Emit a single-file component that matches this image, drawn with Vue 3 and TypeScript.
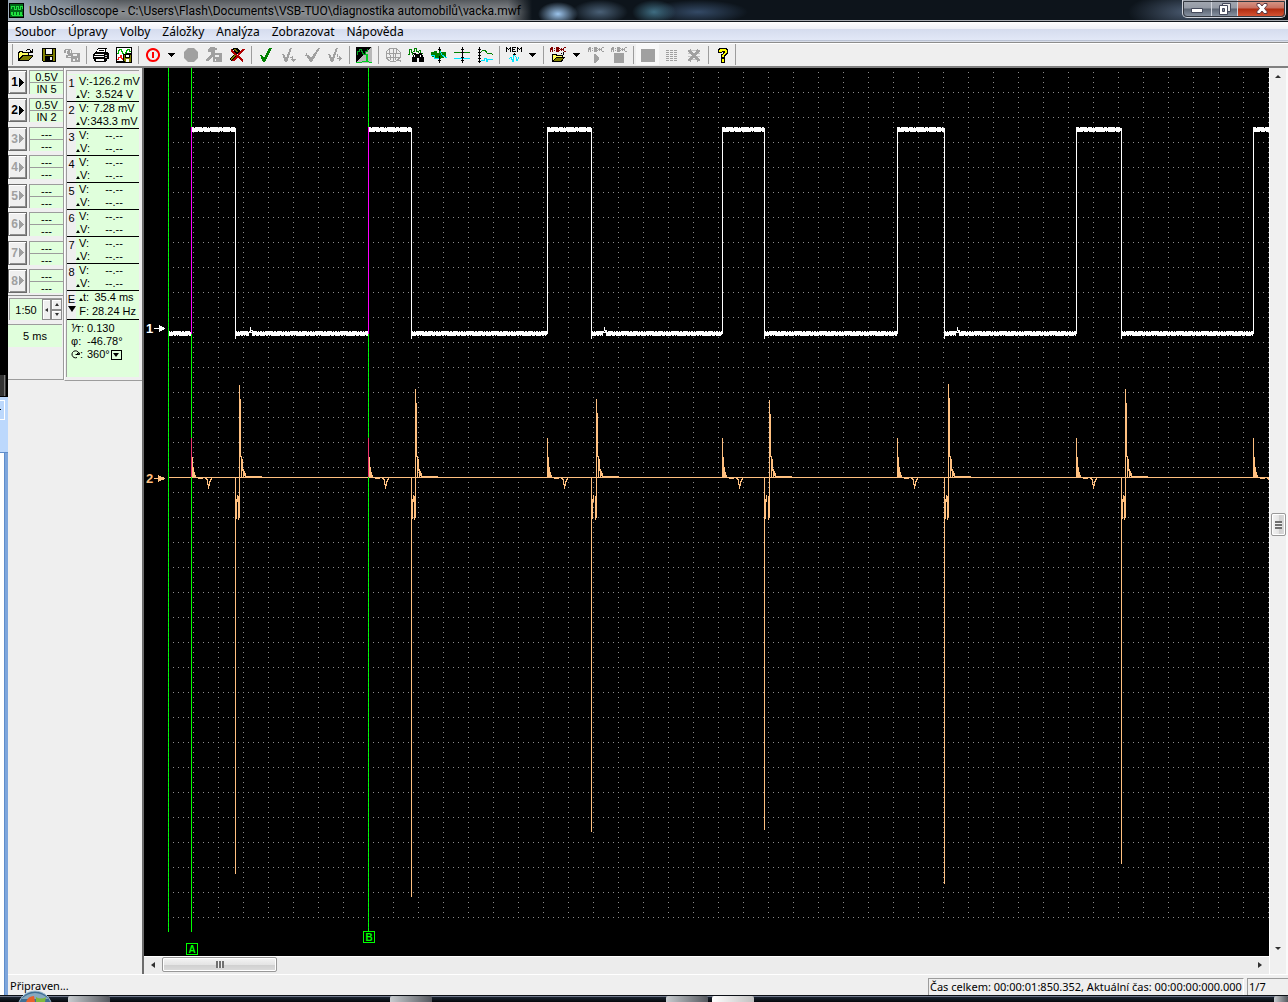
<script setup lang="ts">
interface Layer {
  d: string
  fill?: string
  stroke?: string
  w?: number
  smooth?: boolean
}
interface Tool {
  kind: 'button' | 'drop' | 'sep'
  label?: string
  icon?: string
  disabled?: boolean
  pressed?: boolean
}

const G = '#a0a0a0'
const K = '#000000'
const DG = '#008000'
const CY = '#00e5ff'
const OL = '#808000'
const DR = '#800000'

const abc = (c: string): Layer => ({
  d: 'M1 0h2v5h-1v-2h-1v2h-1v-4h1zM4 1h1v1h-1zM4 3h1v1h-1zM6 0h3v1h1v1h-1v1h1v1h-1v1h-3zM10 2h3v1h-3zM11 1h1v3h-1zM14 0h2v1h-2v3h2v1h-2v-1h-1v-3h1z',
  fill: c,
})

const icons: Record<string, Layer[]> = {
  open: [
    { d: 'M9 2h3v1h-3zM8 3h1v1h-1zM12 3h1v1h1v-2h1v4h-4v-1h1v-1h-1z', fill: K },
    { d: 'M0 5h1v-1h4v1h6v3h4v1l-4 5h-11z', fill: K },
    { d: 'M1 6h1v-1h2v1h6v2h-6l-3 4z', fill: '#ffff60' },
    { d: 'M5 9h9l-3 4h-9z', fill: OL },
  ],
  save: [
    { d: 'M1 1h14v14h-13l-1-1z', fill: K },
    { d: 'M2 2h2v6h8v-6h2v12h-12z', fill: OL },
    { d: 'M5 2h6v5h-6z', fill: '#f4f4f4' },
    { d: 'M4 9h8v5h-8z', fill: K },
    { d: 'M9 10h2v3h-2z', fill: '#f4f4f4' },
  ],
  tape: [
    { d: 'M1 2h6v1h-6zM0 3h2v3h-2zM3 4h1v-1h2v4h-3zM7 3h1v3h-1zM2 8h2v2h3v1h-5zM4 6h12v9h-9v-6h-3z', fill: G },
    { d: 'M9 7h4v2h-4zM9 12h2v2h-2zM13 11h1v2h-1z', fill: '#efefef' },
  ],
  print: [
    { d: 'M5 1h9v1h-1v3h2v1h1v6h-2v2h-1v1h-11v-1h-1v-2h-1v-5h1v-1h1v-1h1z', fill: K },
    { d: 'M5 2h7v3h-8zM2 7h9v1h-9zM1 9h10v1h-10zM3 12h8v2h-8z', fill: '#ffffff' },
    { d: 'M12 8h2v1h-2zM12 10h2v1h-2z', fill: '#c0c0c0' },
    { d: 'M6 3h5v1h-5z', fill: K },
  ],
  wavesave: [
    { d: 'M0 0h16v16h-16z', fill: K },
    { d: 'M1 1h14v5h-6v8h-8z', fill: '#ffffff' },
    { d: 'M1 6h1v-3h1v-1h2v2h1v2h1v1h2v-2h1v-2h1v-1h2v2h1v1', stroke: '#00b000' },
    { d: 'M1 12h1v-2h2v-2h1v3h1v1h2', stroke: '#ff2020' },
    { d: 'M7 7h9v9h-8l-1-1z', fill: K },
    { d: 'M8 8h1v3h5v-3h1v7h-6v-1h-1z', fill: OL },
    { d: 'M10 12h3v3h-3zM10 8h3v2h-3z', fill: '#ffffff' },
  ],
  power: [
    { d: 'M8 2a6 6 0 1 0 .01 0z', stroke: '#ff0000', w: 2, smooth: true },
    { d: 'M7 5h2v6h-2z', fill: '#ff0000' },
  ],
  record: [{ d: 'M5 1h6l4 4v6l-4 4h-6l-4-4v-6z', fill: G, smooth: true }],
  hammer: [
    { d: 'M4 0h5v1h2v2h-2v3h7v9h-9v-6l-5 5h-2v-2l5-5v-2h-3v-3h1z', fill: G },
    { d: 'M9 8h4v2h-4zM9 12h1v2h-1z', fill: '#efefef' },
  ],
  hammerx: [
    { d: 'M4 1h4l3 3v3h-3l-3-2v-2h-2zM0 12l6-6 2 2-6 6z', fill: K },
    { d: 'M5 2h2l2 3h-2zM1 12l5-5 1 1-5 5z', fill: OL },
    { d: 'M2 3l12 11M15 2l-11 12', stroke: '#b00000', w: 2 },
  ],
  check: [{ d: 'M2 8h2l2 3 5-10h3l-7 14h-2z', fill: DG }],
  check1: [{ d: 'M1 7h2l2 4 4-10h2l-5 14h-2zM9 10h2v1h-2zM11 9h1v3h3v1h-1v1h-1v1h-1v-1h-1v-1h-1v-1h1z', fill: G }],
  check2: [{ d: 'M0 8h2v-2h1v2h2l2 3 7-10h2l-8 14h-2l-2-4h-1v-2h-2z', fill: G }],
  check3: [{ d: 'M1 7h2l2 4 4-10h2l-5 14h-2zM10 7h1v3h-1zM10 11h2v-2h1v1h1v1h1v1h-1v1h-1v1h-1v-2h-2z', fill: G }],
  invert: [
    { d: 'M0 0h16v16h-16z', fill: '#b8b8b8' },
    { d: 'M0 0h16L0 15z', fill: K },
    { d: 'M1 8v-4h2v-2h2v2h1v2h1v1h2v-3h2v-2', stroke: '#00a020' },
    { d: 'M0 15h6l3-1h1v-7h1v7l2 1h3', stroke: '#00d020' },
  ],
  globe: [
    { d: 'M5 1h6l4 4v6l-4 3h-6l-4-3v-6zM1 6h14M1 10h14M4 2l2 11M12 2l-2 11M8 1v13M12 13h3v2', stroke: G },
  ],
  binoc: [
    { d: 'M0 7h1v-5h2v3h1v3M5 4h1v-3h2v3h2v2M11 3h1v3h3', stroke: DG },
    { d: 'M5 6h3v1h3v-1h3v2h1v2h1v5h-5v-4h-2v4h-5v-5h1v-2h1z', fill: K },
    { d: 'M6 8h1v2h-1zM12 8h1v2h-1z', fill: '#ffffff' },
  ],
  cut: [
    { d: 'M0 8v-3h3v-1h3v2h2v-3h2v2h5v5h-2v1h-3v1h-4v-1h-2v-1h-3z', fill: DG },
    { d: 'M0 8h3v3h4v1M9 4l2 4 3 2h2', stroke: CY },
    { d: 'M8 0h1v4h-1zM7 2h3v1h-3zM8 9h1v7h-1zM7 13h3v1h-3z', fill: K },
  ],
  levels: [
    { d: 'M0 5h16', stroke: DG },
    { d: 'M0 11h16', stroke: CY },
    { d: 'M8 0h1v16h-1zM7 2h3v1h-3zM7 5h3v1h-3zM7 10h3v1h-3zM7 13h3v1h-3z', fill: K },
  ],
  scale: [
    { d: 'M4 5l2-2h2l2 3h4l2 2', stroke: DG },
    { d: 'M4 13h3v-2h2v3h1v-2h6', stroke: CY },
    { d: 'M2 0h1v16h-1zM1 2h3v1h-3zM1 5h3v1h-3zM1 8h3v1h-3zM1 11h3v1h-3zM1 14h3v1h-3z', fill: K },
  ],
  mem: [
    { d: 'M0 0h1v1h1v1h1v-1h1v-1h1v5h-1v-3h-1v1h-1v-1h-1v3h-1zM6 0h4v1h-3v1h2v1h-2v1h3v1h-4zM11 0h1v1h1v1h1v-1h1v-1h1v5h-1v-3h-1v1h-1v-1h-1v3h-1z', fill: K },
    { d: 'M3 12l2-2 2 5 1-7 2 2 1 4 2-4', stroke: CY },
    { d: 'M8 6h1v1h1v1h-3v-1h1z', fill: K },
  ],
  abcopen: [
    abc(DR),
    { d: 'M2 7h5v1h6v2h2l-3 5h-10zM13 5h1v3h-1zM11 6h1v1h-1z', fill: K },
    { d: 'M3 8h3v1h6v1h-6l-3 4z', fill: '#ffff60' },
    { d: 'M6 11h7l-2 3h-7z', fill: OL },
  ],
  abcplay: [abc(G), { d: 'M6 7h1l4 4v1l-4 4h-1z', fill: G }],
  abcstop: [abc(G), { d: 'M3 6h10v10h-10z', fill: G }],
  block: [{ d: 'M1 2h14v13h-14z', fill: G }],
  lines: [{ d: 'M3 3h11M3 5h11M3 7h11M3 9h11M3 11h11M3 13h11', stroke: G }, { d: 'M6 2v12M10 2v12', stroke: '#efefef' }],
  linesx: [{ d: 'M2 3h12M2 6h12M2 9h12M2 12h12', stroke: '#c4c4c4' }, { d: 'M3 3l10 11M13 3l-10 11', stroke: G, w: 3 }],
  help: [
    { d: 'M4 1h8v1h1v5h-1v1h-1v1h-1v2h-4v-4h2v-2h-1v1h-4v-4h1z', fill: K },
    { d: 'M6 11h4v5h-4z', fill: K },
    { d: 'M5 2h6v1h1v3h-1v1h-1v1h-1v2h-2v-2h1v-1h1v-1h1v-2h-3v1h-3v-2h1zM7 12h2v3h-2z', fill: '#ffff00' },
  ],
}

const b = (icon: string, label: string, disabled = false, pressed = false): Tool => ({ kind: 'button', icon, label, disabled, pressed })
const sep: Tool = { kind: 'sep' }
const drop = (label: string): Tool => ({ kind: 'drop', label })

const tools: Tool[] = [
  b('open', 'Otevřít'), b('save', 'Uložit'), b('tape', 'Uložit část', true), sep,
  b('print', 'Tisk'), b('wavesave', 'Uložit obrázek'), sep,
  b('power', 'Start'), drop('Režim startu'), b('record', 'Záznam', true), b('hammer', 'Nastavení', true), b('hammerx', 'Zrušit nastavení'), sep,
  b('check', 'Použít'), b('check1', 'Záložka dolů', true), b('check2', 'Předchozí záložka', true), b('check3', 'Další záložka', true), sep,
  b('invert', 'Invertovat barvy'), sep,
  b('globe', 'Přehled', true), b('binoc', 'Hledat'), b('cut', 'Filtr'), b('levels', 'Úrovně'), b('scale', 'Měřítko'), sep,
  b('mem', 'Paměť'), drop('Volba paměti'), sep,
  b('abcopen', 'Otevřít skript'), drop('Skripty'), b('abcplay', 'Spustit skript', true), b('abcstop', 'Zastavit skript', true), sep,
  b('block', 'Plocha', true, true), b('lines', 'Řádky', true), b('linesx', 'Smazat řádky', true), sep,
  b('help', 'Nápověda'),
]

const menus = ['Soubor', 'Úpravy', 'Volby', 'Záložky', 'Analýza', 'Zobrazovat', 'Nápověda']

const channels = [
  { n: 1, range: '0.5V', input: 'IN 5', v: '-126.2 mV', dv: '3.524 V' },
  { n: 2, range: '0.5V', input: 'IN 2', v: '7.28 mV', dv: '343.3 mV' },
  ...[3, 4, 5, 6, 7, 8].map((n) => ({ n, range: '---', input: '---', v: '--.--', dv: '--.--' })),
]

/* Graticule: major lines every 25 units, a dot every 5 units. */
const rows = Array.from({ length: 34 }, (_, i) => 24 + i * 25)
const cols = Array.from({ length: 44 }, (_, i) => 49 + i * 25)

/* Channel 1 pulses, as [rise, fall]. */
const pulses = [[47, 91], [224, 267], [403, 447], [578, 620], [753, 800], [932, 977], [1109, 1140]]
const lows = pulses.map((p, i) => [i === 0 ? 24 : pulses[i - 1][1], p[0]])
const blips = [107, 461, 814]

/* Channel 2 ignition spikes: fall, spike position, spike top, deepest point. */
const kicks = [
  [91, 95, 317, 806], [267, 271, 321, 829], [447, 452, 331, 764],
  [620, 625, 332, 762], [800, 804, 316, 816], [977, 981, 321, 796],
]

const seg = (x: number, a: number, z: number) => `M${x} ${a}h1V${z}h-1z`
const riseShape = (x: number) =>
  seg(x, 370, 410) + seg(x + 1, 389, 409) + seg(x + 2, 399, 409) + seg(x + 3, 404, 409) + seg(x + 4, 407, 410) +
  `M${x + 5} 409h9v1h-9zM${x + 7} 410h5v1h-5z` +
  seg(x + 14, 409, 411) + seg(x + 15, 410, 412) + seg(x + 16, 411, 417) + seg(x + 17, 416, 421) +
  seg(x + 18, 413, 418) + seg(x + 19, 411, 414) + seg(x + 20, 410, 412)
const kickShape = ([f, s, top, deep]: number[]) =>
  seg(f, 409, deep) + seg(f + 1, 431, 451) + seg(f + 2, 427, 434) + seg(s - 1, 428, 452) +
  seg(s, top, 450) + seg(s + 1, top + 14, 389) + seg(s + 2, 388, 410) + seg(s + 3, 391, 403) +
  seg(s + 4, 401, 410) + seg(s + 5, 403, 408) + seg(s + 6, 405, 409) + `M${s + 7} 408h16v1h-16z`

const trace2 = [...pulses.map((p) => riseShape(p[0])), ...kicks.map(kickShape)].join('')
</script>

<template>
  <div class="screen">
    <div class="desktop">
      <div class="behind"><div class="behind-dark"></div><div class="behind-edge"></div><div class="behind-box"></div><div class="behind-blue"></div></div>
      <main class="window">
        <header class="title">
          <svg class="app-icon" width="16" height="16" viewBox="0 0 16 16" shape-rendering="crispEdges" aria-hidden="true">
            <path d="M0 0h15v15h-15z" fill="#000" />
            <path d="M1 1h13v13h-13z" fill="#006818" />
            <path d="M2 6v-3h3v3h2v-3h2v3h2v-3h2v3M2 12v-3h1v3h2v-3h1v3h2v-3h1v3h2v-3h1v3h2" fill="none" stroke="#20e040" />
          </svg>
          <h1>UsbOscilloscope - C:\Users\Flash\Documents\VSB-TUO\diagnostika automobilů\vacka.mwf</h1>
          <div class="caption">
            <button type="button" class="cap min" aria-label="Minimalizovat"><svg width="12" height="12" viewBox="0 0 12 12"><path d="M.5 5.500h11v4h-11z" fill="#fff" stroke="#454a5c" /></svg></button>
            <button type="button" class="cap max" aria-label="Obnovit"><svg width="12" height="12" viewBox="0 0 12 12"><path d="M3.500.5h8v8h-8z" fill="#eee" stroke="#454a5c" /><path d="M.5 2.500h8v9h-8z" fill="#fff" stroke="#454a5c" /><path d="M3.500 5.500h2v3h-2z" fill="#8a92a0" stroke="#454a5c" /></svg></button>
            <button type="button" class="cap close" aria-label="Zavřít"><svg width="12" height="11" viewBox="0 0 12 11"><path d="M1 .5h3l2 2.500 2-2.500h3v2l-2.500 3 2.500 3v2h-3l-2-2.500-2 2.500h-3v-2l2.500-3-2.500-3z" fill="#fff" stroke="#5a3a44" /></svg></button>
          </div>
        </header>
        <nav class="menu"><button v-for="m in menus" :key="m" type="button">{{ m }}</button></nav>
        <div class="toolbar">
          <div class="tools" role="toolbar" aria-label="Nástroje">
            <template v-for="(t, i) in tools" :key="i">
              <span v-if="t.kind === 'sep'" class="sep"></span>
              <button v-else-if="t.kind === 'drop'" type="button" class="drop" :aria-label="t.label">
                <svg width="7" height="4" viewBox="0 0 7 4" shape-rendering="crispEdges"><path d="M0 0h7v1h-1v1h-1v1h-1v1h-1v-1h-1v-1h-1v-1h-1z" /></svg>
              </button>
              <button v-else type="button" class="tool" :class="{ pressed: t.pressed }" :disabled="t.disabled" :aria-label="t.label">
                <svg width="16" height="16" viewBox="0 0 16 16">
                  <path
                    v-for="(l, k) in icons[t.icon!]" :key="k" :d="l.d" :fill="l.fill ?? 'none'" :stroke="l.stroke ?? 'none'"
                    :stroke-width="l.w ?? 1" :shape-rendering="l.smooth ? 'auto' : 'crispEdges'"
                  />
                </svg>
              </button>
            </template>
          </div>
        </div>

        <div class="body">
          <aside class="side">
            <section class="inputs">
              <div class="channel-list">
                <div v-for="c in channels" :key="c.n" class="channel">
                  <button type="button" class="chan" :disabled="c.n > 2" :aria-label="'Kanál ' + c.n">
                    {{ c.n }}<svg width="5" height="9" viewBox="0 0 5 9" shape-rendering="crispEdges"><path d="M0 0L5 4.500L0 9z" fill="currentColor" /></svg>
                  </button>
                  <div class="fields"><output>{{ c.range }}</output><output>{{ c.input }}</output></div>
                </div>
              </div>
              <div class="zoom">
                <output>1:50</output>
                <button type="button" class="spin tall" aria-label="Výchozí"><i class="tri left"></i></button>
                <div class="spins">
                  <button type="button" class="spin" aria-label="Více"><i class="tri up"></i></button>
                  <button type="button" class="spin" aria-label="Méně"><i class="tri down"></i></button>
                </div>
              </div>
              <output class="time">5 ms</output>
            </section>
            <section class="readout">
              <div class="values">
                <div v-for="c in channels" :key="c.n" class="meas">
                  <b>{{ c.n }}</b>
                  <p><span class="lab">V:</span><output>{{ c.v }}</output></p>
                  <p><span class="lab delta">V:</span><output>{{ c.dv }}</output></p>
                </div>
                <div class="meas ext">
                  <b>E<i class="tri marker"></i></b>
                  <p><span class="lab delta">t:</span><output>35.4 ms</output></p>
                  <p><span class="lab">F:</span><output>28.24 Hz</output></p>
                </div>
                <div class="phase">
                  <p><span>⅟т:</span><output>0.130</output></p>
                  <p><span>φ:</span><output>-46.78°</output></p>
                  <p>
                    <span><svg width="9" height="9" viewBox="0 0 9 9"><path d="M8 4.500a3.500 3.500 0 1 0-2 3M8 4.500h-3.500M6 3l2 2 1-2.500" fill="none" stroke="#000" /></svg>:</span><output>360°</output>
                    <button type="button" class="deg" aria-label="Rozsah úhlu"><i class="tri marker"></i></button>
                  </p>
                </div>
              </div>
            </section>
          </aside>

          <div class="view">
            <svg class="plot" shape-rendering="crispEdges" role="img" aria-label="Průběh signálů">
              <g stroke="#8c8c8c" stroke-dasharray="1 4">
                <line v-for="y in rows" :key="'r' + y" x1="29" :y1="y + 0.5" x2="1125" :y2="y + 0.5" />
                <line v-for="x in cols" :key="'c' + x" :x1="x + 0.5" y1="4" :x2="x + 0.5" y2="850" />
              </g>
              <g fill="#fff">
                <template v-for="p in pulses" :key="p[0]">
                  <rect :x="p[0]" y="60" :width="p[1] - p[0]" height="3" />
                  <path :d="`M${p[0]} 59.500H${p[1]}`" stroke="#fff" stroke-dasharray="3 1 7 1 4 1 1 1 8 1" />
                  <path :d="`M${p[0]} 63.500H${p[1]}`" stroke="#fff" stroke-dasharray="7 1 4 1 6 1 9 1 1 1" />
                  <path :d="seg(p[0], 60, 266) + seg(p[1], 60, 271)" />
                </template>
                <template v-for="l in lows" :key="l[0]">
                  <rect :x="l[0]" y="264" :width="l[1] - l[0]" height="3" />
                  <path :d="`M${l[0]} 263.500H${l[1]}`" stroke="#fff" stroke-dasharray="2 1 1 1 8 1 2 1 5 1 1 1" />
                  <path :d="`M${l[0]} 267.500H${l[1]}`" stroke="#fff" stroke-dasharray="5 1 2 1 1 1 9 1 3 1" />
                </template>
                <path v-for="x in blips" :key="x" :d="`M${x - 1} 263h3v-1h-2v-3h-1z`" />
              </g>
              <path v-for="x in blips" :key="x" :d="`M${x - 2} 265h3v3h-3z`" fill="#000" />
              <path d="M24 409.500H1125" stroke="#ffc080" />
              <path :d="trace2" fill="#ffc080" />
              <path d="M24.500 0V864M47.500 0V864M224.500 0V863" stroke="#00ff00" />
              <path d="M24.500 4V864M224.500 4V863" stroke="#00c020" stroke-dasharray="1 4" />
              <path d="M47.500 59V266M224.500 59V266" stroke="#ff00ff" />
              <path d="M47.500 370V409M224.500 370V409" stroke="#f03070" />
              <g class="tag">
                <rect x="42.500" y="875.500" width="11" height="11" rx="1" /><text x="48" y="885">A</text>
                <rect x="219.500" y="863.500" width="11" height="11" rx="1" /><text x="225" y="873">B</text>
              </g>
              <g class="mark" fill="#fff"><text x="2" y="265">1</text><path d="M10 260h5v-3l6 3v1l-6 3v-3h-5z" /></g>
              <g class="mark" fill="#ffc080"><text x="2" y="415">2</text><path d="M10 410h4v-3l7 3v1l-7 3v-3h-4z" /></g>
            </svg>
            <div class="hscroll">
              <button type="button" class="arrow" aria-label="Posunout vlevo"><i class="tri left"></i></button>
              <button type="button" class="thumb" aria-label="Posuvník času"><i class="grip"></i></button>
              <span class="track"></span>
              <button type="button" class="arrow" aria-label="Posunout vpravo"><i class="tri right"></i></button>
            </div>
          </div>
          <div class="vscroll">
            <button type="button" class="arrow" aria-label="Posunout nahoru"><i class="tri up"></i></button>
            <span class="track above"></span>
            <button type="button" class="thumb" aria-label="Svislý posuvník"><i class="grip"></i></button>
            <span class="track below"></span>
            <button type="button" class="arrow" aria-label="Posunout dolů"><i class="tri down"></i></button>
          </div>
        </div>
        <footer class="status">
          <span class="ready">Připraven...</span>
          <span class="cell total">Čas celkem: 00:00:01:850.352, Aktuální čas: 00:00:00:000.000</span>
          <span class="cell page">1/7</span>
        </footer>
      </main>
    </div>
    <div class="taskbar">
      <svg class="orb" width="36" height="12" viewBox="0 0 36 12" aria-hidden="true">
        <circle cx="18" cy="18" r="17" fill="#3f6f94" stroke="#a9c4d6" />
        <path d="M4 9q14-12 28 0z" fill="#86a9c0" />
        <path d="M9 12q2-6 8-6l1 6z" fill="#e8602c" /><path d="M19 7q5 3 10 0l-1 5h-9z" fill="#7fb83c" />
      </svg>
      <i class="task t1"></i><i class="task t2"></i><i class="task t3"></i><i class="task t4"></i><i class="task t5"></i>
    </div>
  </div>
</template>

<style>
body { margin: 0; background: #000; }
</style>

<style scoped>
* { box-sizing: border-box; }
button { margin: 0; padding: 0; border: 0; background: none; font: inherit; color: inherit; display: flex; align-items: center; justify-content: center; flex: none; }
svg { display: block; flex: none; }
p { margin: 0; }
.screen { min-height: 100vh; display: flex; flex-direction: column; font: 12px/16px "Noto Sans", "Open Sans", sans-serif; color: #000; }
.desktop { flex: 1; display: flex; }
.behind { width: 8px; display: flex; flex-direction: column; background: #000; }
.behind-dark { height: 375px; }
.behind-edge { height: 22px; background: linear-gradient(90deg, #333 0 4px, #777 4px 5px, #333 5px 6px, #000 6px); border-bottom: 1px solid #000; }
.behind-box { height: 55px; background: linear-gradient(#fff, #fff) 4px 3px / 1px 20px no-repeat, linear-gradient(#fff, #fff) 0 3px / 4px 1px no-repeat, linear-gradient(#fff, #fff) 0 22px / 4px 1px no-repeat, linear-gradient(#000, #000) 0 12px / 1px 1px no-repeat, #bcd8fc; }
.behind-blue { flex: 1; border-top: 1px solid #5f8dca; background: linear-gradient(90deg, #fff 0 4px, #5f8dca 4px 5px, #7ea6dc 5px); }

.window { flex: 1; min-width: 0; display: flex; flex-direction: column; background: #efefef; }
.title { height: 22px; display: flex; align-items: flex-start; border-bottom: 1px solid #10161c; box-shadow: inset 0 -1px #a8acb2; padding: 0 2px 0 1px;
  background:
    radial-gradient(ellipse 20px 12px at 550px 14px, #9cc4ec, transparent),
    radial-gradient(ellipse 28px 12px at 592px 12px, #4a6076, transparent),
    radial-gradient(ellipse 22px 12px at 646px 12px, #3f6d82, transparent),
    radial-gradient(ellipse 50px 12px at 690px 12px, #344a66, transparent),
    radial-gradient(ellipse 60px 20px at 1180px 12px, #4a5a70, transparent),
    linear-gradient(90deg, rgba(176, 196, 216, .7) 0, transparent 110px),
    linear-gradient(90deg, transparent 0 500px, #0d141b 524px),
    linear-gradient(#54585c, #8c8f92 12px, #74777a); }
.app-icon { margin: 3px 4px 0 0; }
h1 { margin: 3px 0 0; font: 12px/16px Roboto, sans-serif; white-space: nowrap; flex: 1; }
.caption { display: flex; height: 18px; border: 1px solid #d0d4dc; border-top: 0; border-radius: 0 0 5px 5px; overflow: hidden; outline: 1px solid #33373f; outline-offset: -2px; }
.cap { border-right: 1px solid #d0d4dc; background: linear-gradient(#a5aab3, #949aa5 8px, #5c6573 9px, #8c97a6); }
.min { width: 29px; }
.max { width: 26px; }
.close { width: 47px; border: 0; background: linear-gradient(#d8a090, #c87060 8px, #b02c10 9px, #d85838); }

.menu { height: 20px; display: flex; align-items: center; padding: 0 0 0 1px; background: linear-gradient(#fff 0, #eef1f8 7px, #d5dcee 7px, #e2e8f7 18px, #aab4c8 18px, #e8ebf2); }
.menu button { padding: 0 6px; }
.toolbar { height: 26px; background: #efefef; border-top: 1px solid #8c8c8c; border-bottom: 2px solid #808080; box-shadow: inset 0 1px #fff; padding: 1px 0 0 4px; display: flex; }
.tools { display: flex; align-items: center; height: 21px; padding: 0 1px; border-left: 1px solid #9c9c9c; border-right: 1px solid #9c9c9c; }
.tool { width: 23px; height: 21px; }
.tool.pressed { background: #f8f8f8; }
.drop { width: 15px; height: 21px; }
.sep { width: 6px; height: 18px; display: flex; justify-content: center; }
.sep::before { content: ""; width: 1px; background: #9c9c9c; }

.body { flex: 1; display: flex; }
.side { width: 136px; flex: none; display: flex; align-items: flex-start; border-right: 2px solid #6c6c6c; font: 11px/13px "Liberation Sans", sans-serif; }
.inputs { width: 56px; flex: none; height: 312px; border-right: 1px solid #9c9c9c; border-bottom: 1px solid #9c9c9c; padding-top: 2px; display: flex; flex-direction: column; }
.channel-list { height: 226px; display: flex; flex-direction: column; justify-content: space-between; padding-bottom: 2px; border-bottom: 1px solid #8c8c8c; }
.channel { display: flex; height: 24px; gap: 2px; }
.chan { width: 19px; height: 24px; gap: 1px; font: bold 12px/14px "Liberation Sans", sans-serif; border: 1px solid #6c6c6c; box-shadow: inset 1px 1px #fff, inset -1px -1px #909090; background: #efefef; }
.chan:disabled { color: #a0a0a0; }
.fields { flex: 1; display: grid; grid-template-rows: 12px 12px; }
.fields output { background: #e0ffdc; border-top: 1px solid #9c9c9c; border-left: 1px solid #9c9c9c; text-align: center; line-height: 12px; }
.zoom { display: flex; height: 22px; margin: 2px 1px 0; border-left: 1px solid #9c9c9c; border-top: 1px solid #9c9c9c; background: #e0ffdc; }
.zoom output { flex: 1; text-align: center; line-height: 22px; }
.spin { flex: 1; border: 1px solid #8c8c8c; box-shadow: inset 1px 1px #fff; background: #efefef; }
.spin.tall { flex: none; width: 9px; }
.spins { width: 11px; display: flex; flex-direction: column; }
.time { margin: 4px 1px 0 0; height: 23px; line-height: 23px; text-align: center; background: #e0ffdc; border-top: 1px solid #9c9c9c; }
.readout { flex: 1; min-width: 0; height: 313px; border-left: 1px solid #fff; border-bottom: 1px solid #9c9c9c; padding: 2px 3px 3px 1px; }
.values { height: 100%; border-top: 1px solid #9c9c9c; border-left: 1px solid #9c9c9c; padding-top: 4px; background: linear-gradient(#efefef 3px, #e0ffdc 3px); }
.meas { display: grid; grid-template-columns: 9px 1fr; grid-template-rows: 13px 13px; border-bottom: 1px solid #000; }
.meas b { grid-row: 1 / 3; background: #efefef; font-weight: normal; padding-top: 1px; line-height: 14px; text-align: center; }
.meas.ext { grid-template-rows: 14px 14px; }
.meas p { display: flex; white-space: nowrap; }
.lab { width: 13px; flex: none; text-align: right; }
.meas output { flex: 1; text-align: center; }
.delta::before { content: ""; display: inline-block; border: 2px solid transparent; border-bottom: 3px solid #000; border-top: 0; }
.phase { padding: 2px 0 0 4px; }
.phase p { display: flex; height: 13px; align-items: center; }
.phase span { width: 16px; display: flex; align-items: center; }
.deg { width: 11px; height: 10px; margin-left: 1px; border: 1px solid #000; }

.tri { display: block; width: 0; height: 0; border: 2px solid transparent; }
.up { border-top: 0; border-bottom: 3px solid #303030; }
.down { border-bottom: 0; border-top: 3px solid #303030; }
.left { border-left: 0; border-right: 3px solid #303030; }
.right { border-right: 0; border-left: 3px solid #303030; }
.marker { border: 4px solid transparent; border-top: 6px solid #000; border-bottom: 0; margin: 0 auto; }
.deg .marker { border-width: 4px 3px 0; }

.view { flex: 1; min-width: 0; display: flex; flex-direction: column; }
.plot { flex: 1; width: 100%; min-height: 888px; background: #000; }
.tag rect { fill: #000; stroke: #00ff00; }
.tag text { fill: #00ff00; font: bold 10px "Liberation Sans", sans-serif; text-anchor: middle; }
.mark text { font: bold 13px "Liberation Sans", sans-serif; }
.hscroll { height: 18px; display: flex; align-items: flex-start; background: #ececec; border-top: 1px solid #fff; }
.arrow { width: 18px; height: 16px; }
.hscroll .arrow .tri, .vscroll .arrow .tri { border-width: 3px; }
.hscroll .arrow .left { border-left: 0; border-right-width: 4px; }
.hscroll .arrow .right { border-right: 0; border-left-width: 4px; }
.vscroll .arrow .up { border-top: 0; }
.vscroll .arrow .down { border-bottom: 0; }
.thumb { border: 1px solid #989898; border-radius: 2px; box-shadow: inset 0 0 0 1px #fff; }
.hscroll .thumb { width: 115px; height: 15px; background: linear-gradient(#f4f4f4, #e4e4e4 7px, #d0d0d0 7px, #dcdcdc); }
.grip { width: 8px; height: 7px; background: repeating-linear-gradient(90deg, #707070 0 2px, #f0f0f0 2px 3px); }
.track { flex: 1; }
.track.above { flex: 17; }
.track.below { flex: 16; }
.vscroll { width: 19px; flex: none; display: flex; flex-direction: column; align-items: center; background: #f0f0f0; border-left: 1px solid #fff; border-right: 2px solid #fafafa; padding-bottom: 18px; }
.vscroll .thumb { width: 15px; height: 23px; background: linear-gradient(90deg, #f4f4f4, #e4e4e4 7px, #d0d0d0 7px, #dcdcdc); }
.vscroll .grip { width: 7px; height: 8px; background: repeating-linear-gradient(#707070 0 2px, #f0f0f0 2px 3px); }

.status { height: 21px; display: flex; align-items: flex-end; gap: 3px; padding-left: 2px; border-top: 1px solid #fff; font-size: 11px; }
.ready { flex: 1; line-height: 18px; }
.cell { height: 17px; line-height: 16px; border-left: 1px solid #9c9c9c; border-top: 1px solid #9c9c9c; padding-left: 1px; white-space: nowrap; }
.total { width: 316px; border-right: 1px solid #fff; }
.page { width: 41px; }

.taskbar { height: 7px; position: relative; background: linear-gradient(#0c1016 1px, #70788a 1px 2px, #1a2430 2px, #05080c); }
.orb { position: absolute; left: 17px; bottom: 0; }
.task { position: absolute; top: 1px; width: 42px; height: 6px; background: linear-gradient(90deg, #c8ccd0, #55585e); border-radius: 2px 2px 0 0; }
.t1 { left: 68px; }
.t2 { left: 390px; }
.t3 { left: 666px; }
.t4 { left: 712px; background: linear-gradient(90deg, #fff, #c0c0c0); }
.t5 { right: 0; width: 14px; }
</style>
